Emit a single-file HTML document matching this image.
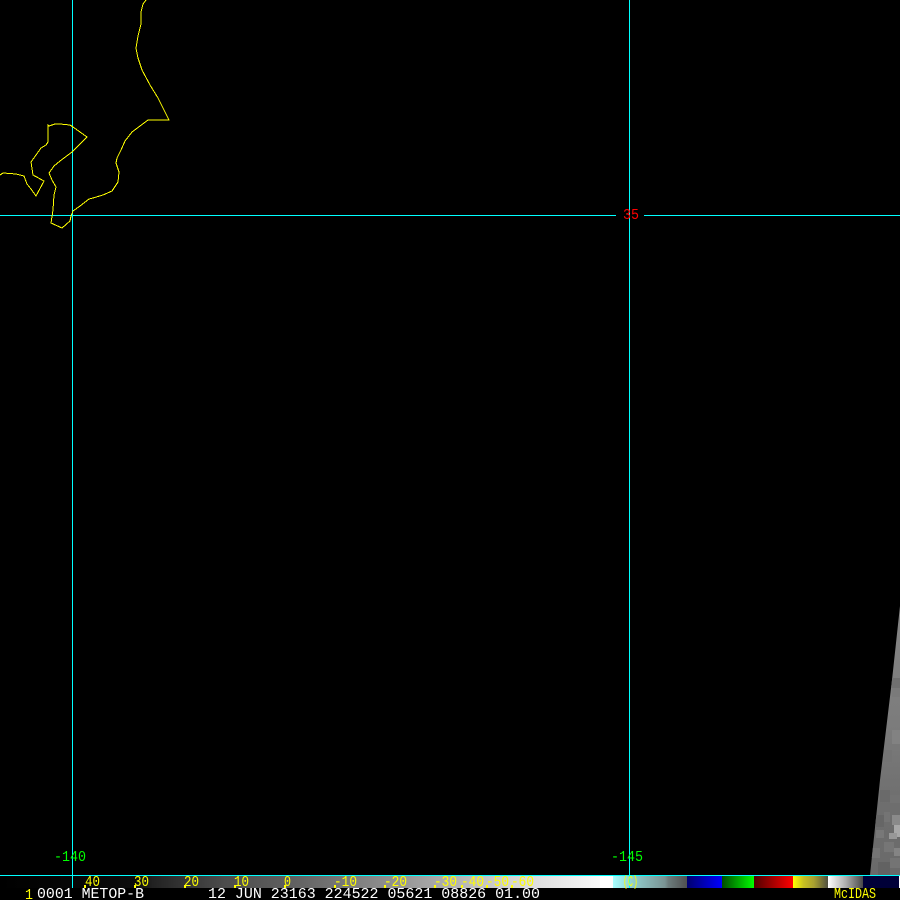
<!DOCTYPE html>
<html><head><meta charset="utf-8"><title>McIDAS METOP-B</title>
<style>
html,body{margin:0;padding:0;background:#000;width:900px;height:900px;overflow:hidden}
svg{display:block}
text{font-family:"Liberation Mono","DejaVu Sans Mono",monospace;font-size:15px}
.w{fill:#fff;font-size:15px}
.y{fill:#ffff00}
.g{fill:#00ff00}
</style></head><body>
<svg width="900" height="900" viewBox="0 0 900 900" xmlns="http://www.w3.org/2000/svg">
<defs>
<linearGradient id="ramp" x1="0" x2="1" y1="0" y2="0">
<stop offset="0" stop-color="#000"/><stop offset=".3" stop-color="#0c0c0c"/><stop offset=".34" stop-color="#222"/><stop offset=".5" stop-color="#4c4c4c"/><stop offset=".65" stop-color="#606060"/><stop offset=".87" stop-color="#909090"/><stop offset="1" stop-color="#b0b0b0"/>
</linearGradient>
<linearGradient id="ramp2" x1="0" x2="1" y1="0" y2="0"><stop offset="0" stop-color="#b0b0b0"/><stop offset=".4" stop-color="#d4d4d4"/><stop offset="1" stop-color="#f8f8f8"/></linearGradient>
<linearGradient id="cy" x1="0" x2="1" y1="0" y2="0"><stop offset="0" stop-color="#a8ffff"/><stop offset=".3" stop-color="#8fc8c8"/><stop offset=".7" stop-color="#7a9494"/><stop offset=".75" stop-color="#6c7c7c"/><stop offset="1" stop-color="#505050"/></linearGradient>
<linearGradient id="bl" x1="0" x2="1" y1="0" y2="0"><stop offset="0" stop-color="#000070"/><stop offset="1" stop-color="#0000ff"/></linearGradient>
<linearGradient id="gr" x1="0" x2="1" y1="0" y2="0"><stop offset="0" stop-color="#004c00"/><stop offset="1" stop-color="#00ff00"/></linearGradient>
<linearGradient id="rd" x1="0" x2="1" y1="0" y2="0"><stop offset="0" stop-color="#500000"/><stop offset="1" stop-color="#ff0000"/></linearGradient>
<linearGradient id="ye" x1="0" x2="1" y1="0" y2="0"><stop offset="0" stop-color="#ffff00"/><stop offset=".3" stop-color="#c8c020"/><stop offset=".6" stop-color="#a8a030"/><stop offset="1" stop-color="#505040"/></linearGradient>
<linearGradient id="wh" x1="0" x2="1" y1="0" y2="0"><stop offset="0" stop-color="#fff"/><stop offset=".5" stop-color="#b0b0b0"/><stop offset="1" stop-color="#484848"/></linearGradient>
<linearGradient id="sw" x1="0" x2="0" y1="0" y2="1"><stop offset="0" stop-color="#858585"/><stop offset=".45" stop-color="#7c7c7c"/><stop offset=".75" stop-color="#6e6e6e"/><stop offset="1" stop-color="#6a6a6a"/></linearGradient>
<clipPath id="swc"><polygon points="900,606 892,680 880,780 870,875 900,875"/></clipPath>
</defs>

<g clip-path="url(#swc)" shape-rendering="crispEdges">
<rect x="860" y="600" width="40" height="275" fill="url(#sw)"/>
<rect x="888" y="678" width="12" height="10" fill="#707070"/>
<rect x="892" y="688" width="8" height="9" fill="#7a7a7a"/>
<rect x="884" y="750" width="8" height="12" fill="#747474"/>
<rect x="892" y="730" width="8" height="14" fill="#828282"/>
<rect x="880" y="790" width="10" height="12" fill="#6a6a6a"/>
<rect x="890" y="795" width="10" height="8" fill="#727272"/>
<rect x="872" y="815" width="12" height="12" fill="#666"/>
<rect x="884" y="812" width="6" height="10" fill="#747474"/>
<rect x="892" y="815" width="8" height="10" fill="#8a8a8a"/>
<rect x="894" y="825" width="6" height="12" fill="#a8a8a8"/>
<rect x="889" y="833" width="8" height="6" fill="#989898"/>
<rect x="876" y="830" width="8" height="8" fill="#787878"/>
<rect x="884" y="842" width="10" height="10" fill="#767676"/>
<rect x="870" y="848" width="10" height="10" fill="#747474"/>
<rect x="894" y="848" width="6" height="8" fill="#848484"/>
<rect x="878" y="862" width="12" height="13" fill="#626262"/>
<rect x="890" y="858" width="10" height="10" fill="#747474"/>
</g>

<g shape-rendering="crispEdges">
<rect x="0" y="876" width="450" height="12" fill="url(#ramp)"/>
<rect x="450" y="876" width="150" height="12" fill="url(#ramp2)"/>
<rect x="600" y="876" width="13" height="12" fill="#fff"/>
<rect x="613" y="876" width="74" height="12" fill="url(#cy)"/>
<rect x="687" y="876" width="35" height="12" fill="url(#bl)"/>
<rect x="722" y="876" width="32" height="12" fill="url(#gr)"/>
<rect x="754" y="876" width="39" height="12" fill="url(#rd)"/>
<rect x="793" y="876" width="35" height="12" fill="url(#ye)"/>
<rect x="828" y="876" width="35" height="12" fill="url(#wh)"/>
<rect x="863" y="876" width="36" height="12" fill="#000038"/>
<rect x="899" y="876" width="1" height="12" fill="#fff"/>
<rect x="0" y="875" width="900" height="1" fill="#00ffff"/>
<rect x="72" y="0" width="1" height="888" fill="#00ffff"/>
<rect x="629" y="0" width="1" height="888" fill="#00ffff"/>
<rect x="0" y="215" width="616" height="1" fill="#00ffff"/>
<rect x="644" y="215" width="256" height="1" fill="#00ffff"/>
<rect x="84" y="885" width="2" height="3" fill="#ff0"/><rect x="134" y="885" width="2" height="3" fill="#ff0"/><rect x="184" y="885" width="2" height="3" fill="#ff0"/><rect x="234" y="885" width="2" height="3" fill="#ff0"/><rect x="284" y="885" width="2" height="3" fill="#ff0"/><rect x="334" y="885" width="2" height="3" fill="#ff0"/><rect x="384" y="885" width="2" height="3" fill="#ff0"/><rect x="434" y="885" width="2" height="3" fill="#ff0"/><rect x="461" y="885" width="2" height="3" fill="#ff0"/><rect x="486" y="885" width="2" height="3" fill="#ff0"/><rect x="511" y="885" width="2" height="3" fill="#ff0"/>
</g>

<polyline fill="none" stroke="#ffff00" stroke-width="1" shape-rendering="crispEdges" points="146,0 143,4 141,12 141,24 138,36 136,48 138,58 142,70 150,85 158,98 163,108 169,120 148,120 140,126 132,132 125,141 121,150 117,158 116,163 119,172 118,182 112,191 103,195 93,198 89,199 80,206 73,211 71,216 70,221 62,228 51,223 53,210 54,195 56,187 52,180 49,173 54,166 60,161 72,152 87,137 73,127 70,125 60,124 55,124 49,126 48,125 48,142 46,145 41,148 36,155 31,162 33,175 44,181 36,196 31,189 27,184 24,176 16,174 3,173 0,175"/>

<text x="54" y="861" class="g" textLength="32" lengthAdjust="spacingAndGlyphs">-140</text>
<text x="611" y="861" class="g" textLength="32" lengthAdjust="spacingAndGlyphs">-145</text>
<text x="623" y="219" fill="#ff0000" textLength="16" lengthAdjust="spacingAndGlyphs">35</text>

<g class="y">
<text x="85" y="886" textLength="15" lengthAdjust="spacingAndGlyphs">40</text>
<text x="134" y="886" textLength="15" lengthAdjust="spacingAndGlyphs">30</text>
<text x="184" y="886" textLength="15" lengthAdjust="spacingAndGlyphs">20</text>
<text x="234" y="886" textLength="15" lengthAdjust="spacingAndGlyphs">10</text>
<text x="284" y="886" textLength="7" lengthAdjust="spacingAndGlyphs">0</text>
<text x="334" y="886" textLength="23" lengthAdjust="spacingAndGlyphs">-10</text>
<text x="384" y="886" textLength="23" lengthAdjust="spacingAndGlyphs">-20</text>
<text x="434" y="886" textLength="23" lengthAdjust="spacingAndGlyphs">-30</text>
<text x="461" y="886" textLength="23" lengthAdjust="spacingAndGlyphs">-40</text>
<text x="486" y="886" textLength="23" lengthAdjust="spacingAndGlyphs">-50</text>
<text x="511" y="886" textLength="23" lengthAdjust="spacingAndGlyphs">-60</text>
<text x="623" y="886" textLength="15" lengthAdjust="spacingAndGlyphs">(C)</text>
<text x="834" y="898" textLength="42" lengthAdjust="spacingAndGlyphs">McIDAS</text>
<text x="25" y="899" textLength="8" lengthAdjust="spacingAndGlyphs">1</text>
</g>

<text x="37" y="898" class="w" textLength="107" lengthAdjust="spacingAndGlyphs" xml:space="preserve">0001 METOP-B</text>
<text x="208" y="898" class="w" textLength="332" lengthAdjust="spacingAndGlyphs" xml:space="preserve">12 JUN 23163 224522 05621 08826 01.00</text>
</svg>
</body></html>
